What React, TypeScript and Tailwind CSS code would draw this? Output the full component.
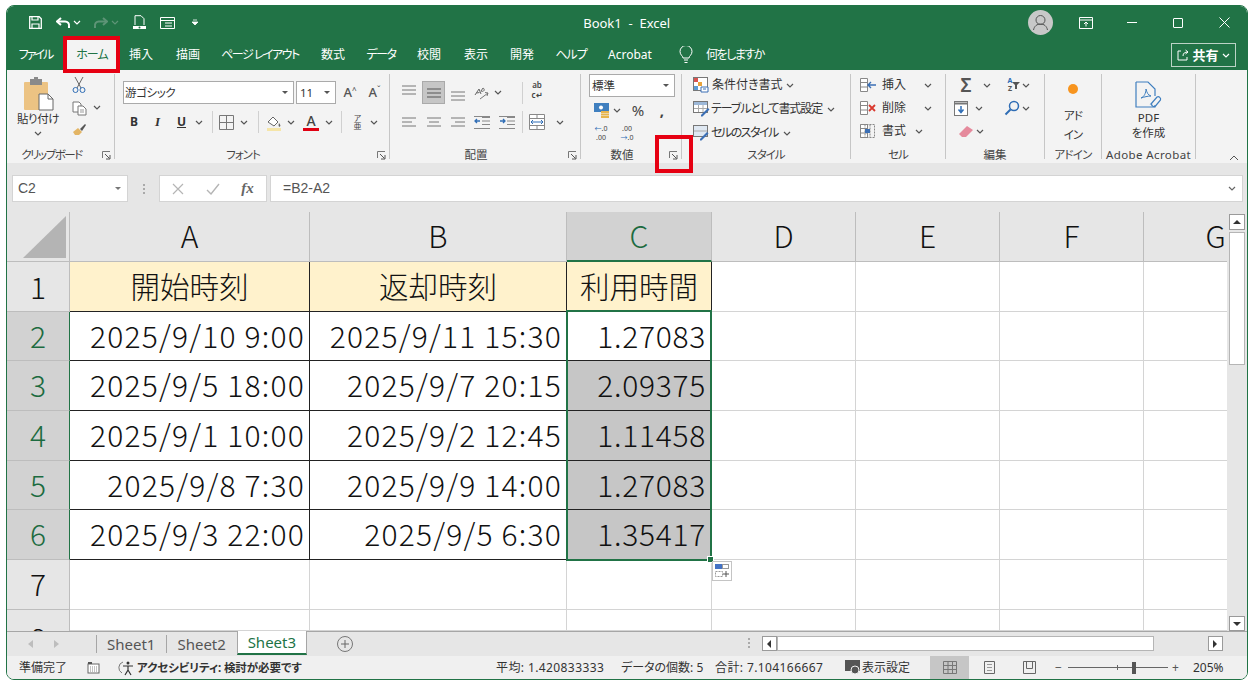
import type { ReactNode } from 'react';

const tabs = [
  { label: 'ファイル', w: 57, cls: 'tracking-[-2px]' },
  { label: 'ホーム', w: 56, cls: 'tracking-[-1px]' },
  { label: '挿入', w: 42, cls: '' },
  { label: '描画', w: 52, cls: '' },
  { label: 'ページ レイアウト', w: 92, cls: 'tracking-[-1.5px]' },
  { label: '数式', w: 54, cls: '' },
  { label: 'データ', w: 42, cls: 'tracking-[-1.5px]' },
  { label: '校閲', w: 54, cls: '' },
  { label: '表示', w: 40, cls: '' },
  { label: '開発', w: 52, cls: '' },
  { label: 'ヘルプ', w: 46, cls: 'tracking-[-1px]' },
  { label: 'Acrobat', w: 72, cls: '' },
];

const rows = [
  ['2025/9/10 9:00', '2025/9/11 15:30', '1.27083'],
  ['2025/9/5 18:00', '2025/9/7 20:15', '2.09375'],
  ['2025/9/1 10:00', '2025/9/2 12:45', '1.11458'],
  ['2025/9/8 7:30', '2025/9/9 14:00', '1.27083'],
  ['2025/9/3 22:00', '2025/9/5 6:30', '1.35417'],
];

const cols = ['A', 'B', 'C', 'D', 'E', 'F', 'G'];
const heads = ['開始時刻', '返却時刻', '利用時間'];

function Chev({ color = '#555' }: { color?: string }) {
  return (
    <svg width="8" height="5" viewBox="0 0 8 5" className="shrink-0">
      <path d="M1 1l3 3 3-3" fill="none" stroke={color} strokeWidth="1.2" />
    </svg>
  );
}

function Launcher() {
  return (
    <svg width="9" height="9" viewBox="0 0 9 9">
      <path d="M.5 7V.5H8" fill="none" stroke="#777" />
      <path d="M3 3l4.5 4.5M8 4v4H4" fill="none" stroke="#555" />
    </svg>
  );
}

function Slot({ w, children }: { w: number; children?: ReactNode }) {
  return (
    <div className="flex shrink-0 items-center justify-center" style={{ width: w }}>
      {children}
    </div>
  );
}

function VSep() {
  return <div className="h-[22px] w-px shrink-0 bg-[#d0d0d0]" />;
}

function Group({ w, label, labelClass = '', launcher, children }: { w: number; label: string; labelClass?: string; launcher?: boolean; children: ReactNode }) {
  return (
    <div className="my-[4px] flex max-h-[85px] shrink-0 flex-col border-r border-[#c6c6c6]" style={{ width: w }}>
      <div className="min-h-0 flex-1">{children}</div>
      <div className="relative flex h-[16px] translate-y-[4px] items-center justify-center text-[11.5px] leading-none whitespace-nowrap text-[#444]">
        <span className={launcher ? 'pr-[18px] ' + labelClass : labelClass}>{label}</span>
        {launcher && (
          <span className="absolute right-[3px] top-[4px] flex">
            <Launcher />
          </span>
        )}
      </div>
    </div>
  );
}

function Lines({ a = 'left', color = '#777' }: { a?: string; color?: string }) {
  const x = a === 'center' ? [1, 3, 1] : a === 'right' ? [1, 5, 1] : [1, 1, 1];
  const w = a === 'full' ? [14, 14, 14] : [14, 10, 14];
  return (
    <svg width="16" height="10" viewBox="0 0 16 10">
      {[1, 5, 9].map((y, i) => (
        <path key={y} d={`M${x[i]} ${y}h${w[i]}`} stroke={color} />
      ))}
    </svg>
  );
}

function SmallIcon({ kind }: { kind: string }) {
  if (kind === 'cond')
    return (
      <svg width="16" height="16" viewBox="0 0 16 16">
        <rect x=".5" y=".5" width="14" height="13" fill="#fff" stroke="#777" />
        <rect x="1" y="1" width="4" height="4" fill="#d9534f" />
        <rect x="5" y="5" width="4" height="4" fill="#e8a33d" />
        <rect x="1" y="9" width="4" height="4" fill="#5b9bd5" />
        <path d="M8 10h7v5H8z" fill="#fff" stroke="#3b6fb5" />
        <path d="M10 12h3" stroke="#3b6fb5" />
      </svg>
    );
  if (kind === 'table')
    return (
      <svg width="17" height="16" viewBox="0 0 17 16">
        <rect x=".5" y=".5" width="14" height="11" fill="#fff" stroke="#777" />
        <rect x="1" y="1" width="13" height="3" fill="#9db8d8" />
        <path d="M1 7.5h13M5.5 4v7M10 4v7" stroke="#aaa" />
        <path d="M8 14l7-7 1.5 1.5-7 7H8z" fill="#3b6fb5" />
      </svg>
    );
  return (
    <svg width="17" height="16" viewBox="0 0 17 16">
      <rect x=".5" y=".5" width="14" height="11" fill="#dfe8f2" stroke="#777" />
      <path d="M1 6h13" stroke="#aaa" />
      <path d="M7 14l7-7 1.5 1.5-7 7H7z" fill="#3b6fb5" />
    </svg>
  );
}

function CellsIcon({ kind }: { kind: string }) {
  return (
    <svg width="18" height="16" viewBox="0 0 18 16">
      <path d="M1.5 1.5h7v13h-7zM1.5 5.5h7M1.5 10h7" fill="#fff" stroke="#888" />
      {kind === 'ins' && <path d="M9 8h8M12 5l-3 3 3 3" fill="none" stroke="#3b6fb5" strokeWidth="1.4" />}
      {kind === 'del' && <path d="M10 5l6 6M16 5l-6 6" stroke="#d9382e" strokeWidth="1.8" />}
      {kind === 'fmt' && (
        <>
          <path d="M1.5 1.5h14v13h-14zM6 1.5v13M11 1.5v13" fill="none" stroke="#888" strokeDasharray="2 1" />
          <rect x="6" y="6" width="5" height="4" fill="#3b6fb5" />
        </>
      )}
    </svg>
  );
}

function Ribbon() {
  return (
    <div className="flex h-[93px] shrink-0 bg-[#f3f3f3] text-[#333]">
      <Group w={108} label="クリップボード" labelClass="tracking-[-1.5px]" launcher>
        <div className="flex h-full">
          <div className="flex w-[62px] flex-col items-center pt-[3px]">
            <svg width="32" height="34" viewBox="0 0 32 34">
              <rect x="2" y="5" width="24" height="28" rx="1" fill="#ecc383" />
              <rect x="8" y="2" width="12" height="6" fill="#8a8a8a" />
              <rect x="12" y="0" width="4" height="3" fill="#8a8a8a" />
              <path d="M17 17h9l5 5v11H17z" fill="#fff" stroke="#666" />
              <path d="M26 17v5h5" fill="none" stroke="#666" />
            </svg>
            <span className="mt-[1px] text-[11.5px] leading-[14px] tracking-[-0.4px] whitespace-nowrap">貼り付け</span>
            <span className="mt-[5px]">
              <Chev />
            </span>
          </div>
          <div className="flex w-[20px] flex-col items-center gap-[7px] pt-[2px]">
            <svg width="14" height="18" viewBox="0 0 14 18">
              <path d="M3 1l6 11M11 1L5 12" stroke="#666" />
              <circle cx="3.5" cy="14" r="2.5" fill="none" stroke="#2f6db5" />
              <circle cx="10.5" cy="14" r="2.5" fill="none" stroke="#2f6db5" />
            </svg>
            <svg width="15" height="15" viewBox="0 0 15 15">
              <path d="M1 1h6l2 2v8H1z" fill="#fff" stroke="#777" />
              <path d="M6 5h5l3 3v6H6z" fill="#fff" stroke="#777" />
              <path d="M8 9h4M8 11h4" stroke="#999" />
            </svg>
            <svg width="15" height="13" viewBox="0 0 15 13">
              <path d="M1 9l5-4 4 4-3 3H3z" fill="#e3b565" />
              <path d="M8 6l5-5 1 1-4 6z" fill="#555" />
            </svg>
          </div>
          <div className="flex h-[66px] w-[16px] items-center justify-center">
            <Chev />
          </div>
        </div>
      </Group>

      <Group w={275} label="フォント" labelClass="tracking-[-1px]" launcher>
        <div className="flex flex-col pl-[8px] pt-[7px]">
          <div className="flex h-[23px] items-center">
            <div className="flex h-[23px] w-[171px] items-center justify-between border border-[#aaa] bg-white pl-[1px] pr-[5px] text-[11.5px] tracking-[-0.4px]">
              游ゴシック
              <svg width="6" height="3" viewBox="0 0 6 3">
                <path d="M0 0h6L3 3z" fill="#555" />
              </svg>
            </div>
            <div className="ml-[2px] flex h-[23px] w-[40px] items-center justify-between border border-[#aaa] bg-white pl-[3px] pr-[5px] text-[11.5px]">
              11
              <svg width="6" height="3" viewBox="0 0 6 3">
                <path d="M0 0h6L3 3z" fill="#555" />
              </svg>
            </div>
            <Slot w={26}>
              <span className="ml-[2px] text-[13px] font-medium text-[#555]">A<sup className="text-[8px]">^</sup></span>
            </Slot>
            <Slot w={24}>
              <span className="ml-[1px] text-[13px] font-medium text-[#555]">A<sup className="text-[8px]">ˇ</sup></span>
            </Slot>
          </div>
          <div className="mt-[7px] flex h-[22px] items-center">
            <Slot w={22}><b className="text-[12px] text-[#333]">B</b></Slot>
            <Slot w={25}><i className="font-['Liberation_Serif',serif] text-[13px] font-bold text-[#333]">I</i></Slot>
            <Slot w={23}><b className="text-[12px] leading-[14px] text-[#333] underline">U</b></Slot>
            <Slot w={12}><Chev /></Slot>
            <Slot w={7} />
            <VSep />
            <Slot w={5} />
            <Slot w={16}>
              <svg width="15" height="15" viewBox="0 0 15 15">
                <path d="M.5.5h14v14H.5zM7.5.5v14M.5 7.5h14" fill="none" stroke="#777" />
              </svg>
            </Slot>
            <Slot w={20}><Chev /></Slot>
            <Slot w={4} />
            <VSep />
            <Slot w={7} />
            <Slot w={17}>
              <svg width="17" height="17" viewBox="0 0 17 17">
                <path d="M2 8l5-5 5 5-4 4z" fill="#fff" stroke="#666" />
                <path d="M13 9c1 1.500 2 2.500 1 3.500s-2-.5-1-3.500z" fill="#666" />
                <rect x="1" y="14" width="14" height="3" fill="#f5e5a8" />
              </svg>
            </Slot>
            <Slot w={16}><Chev /></Slot>
            <Slot w={2} />
            <Slot w={20}>
              <span className="flex flex-col items-center">
                <span className="text-[14px] leading-[14px] font-medium text-[#444]">A</span>
                <span className="h-[3px] w-[16px] bg-[#e00012]" />
              </span>
            </Slot>
            <Slot w={16}><Chev /></Slot>
            <Slot w={4} />
            <VSep />
            <Slot w={5} />
            <Slot w={20}>
              <span className="text-[8px] leading-[8px] text-[#444] [writing-mode:vertical-rl]">ア亜</span>
            </Slot>
            <Slot w={14}><Chev /></Slot>
          </div>
        </div>
      </Group>

      <Group w={191} label="配置" launcher>
        <div className="flex flex-col pl-[11px] pt-[7px]">
          <div className="flex h-[23px] items-center">
            <Slot w={16}><span className="-mt-[6px] flex"><Lines a="full" /></span></Slot>
            <Slot w={5} />
            <div className="flex h-[23px] w-[23px] items-center justify-center border border-[#aaa] bg-[#c6c6c6]">
              <Lines a="full" color="#555" />
            </div>
            <Slot w={1} />
            <Slot w={23}><span className="mt-[6px] flex"><Lines a="full" /></span></Slot>
            <Slot w={24}>
              <svg width="18" height="15" viewBox="0 0 18 15">
                <path d="M3 10l4-6 2 5M4.500 8l3-.5M9 6l2-3c1 .5 1.500 1.500 1 2.500s-2 1-3 .5z" fill="none" stroke="#666" />
                <path d="M8 14l8-6M13 7.500l3 .5-1 3" fill="none" stroke="#777" />
              </svg>
            </Slot>
            <Slot w={10}><Chev /></Slot>
            <Slot w={19} />
            <VSep />
            <Slot w={3} />
            <Slot w={22}>
              <span className="mt-[-6px] text-center text-[8px] leading-[10px] font-semibold text-[#444]">ab<br />c↵</span>
            </Slot>
          </div>
          <div className="mt-[7px] flex h-[22px] items-center">
            <Slot w={16}><Lines a="left" /></Slot>
            <Slot w={5} />
            <Slot w={23}><Lines a="center" /></Slot>
            <Slot w={1} />
            <Slot w={23}><Lines a="right" /></Slot>
            <Slot w={25}>
              <svg width="16" height="13" viewBox="0 0 16 13">
                <path d="M8 1.500h8M8 5h8M8 8.500h8M0 12.500h16M0 .5h16" stroke="#888" />
                <path d="M6 5H1M3 3L1 5l2 2" fill="none" stroke="#2f6db5" strokeWidth="1.3" />
              </svg>
            </Slot>
            <Slot w={25}>
              <svg width="16" height="13" viewBox="0 0 16 13">
                <path d="M8 1.500h8M8 5h8M8 8.500h8M0 12.500h16M0 .5h16" stroke="#888" />
                <path d="M1 5h5M4 3l2 2-2 2" fill="none" stroke="#2f6db5" strokeWidth="1.3" />
              </svg>
            </Slot>
            <Slot w={3} />
            <VSep />
            <Slot w={3} />
            <Slot w={22}>
              <svg width="16" height="16" viewBox="0 0 16 16">
                <path d="M.5.5h15v15H.5zM.5 4.500h15M.5 11.500h15M8 .5v4M8 11.500v4" fill="#fff" stroke="#888" />
                <path d="M2 8h12M4 6L2 8l2 2M12 6l2 2-2 2" fill="none" stroke="#2f6db5" />
              </svg>
            </Slot>
            <Slot w={24}><Chev /></Slot>
          </div>
        </div>
      </Group>

      <Group w={101} label="数値" launcher>
        <div className="flex flex-col pl-[8px]">
          <div className="flex h-[23px] w-[86px] items-center justify-between border border-[#aaa] bg-white pl-[2px] pr-[5px] text-[11.5px]">
            標準
            <svg width="6" height="3" viewBox="0 0 6 3">
              <path d="M0 0h6L3 3z" fill="#555" />
            </svg>
          </div>
          <div className="mt-[1px] flex h-[24px] items-center">
            <Slot w={24}>
              <svg width="17" height="16" viewBox="0 0 17 16">
                <rect x="1" y="1" width="15" height="9" fill="#3f7fbf" />
                <circle cx="8" cy="5.500" r="2" fill="#fff" />
                <rect x="8" y="9" width="8" height="2" fill="#e8b54d" />
                <rect x="8" y="11.500" width="8" height="2" fill="#e8b54d" />
                <rect x="8" y="14" width="8" height="2" fill="#e8b54d" />
              </svg>
            </Slot>
            <Slot w={8}><Chev /></Slot>
            <Slot w={34}><span className="text-[15px] leading-none text-[#444]">%</span></Slot>
            <Slot w={14}><b className="text-[15px] leading-none text-[#444]">,</b></Slot>
          </div>
          <div className="flex h-[22px] items-center">
            <Slot w={24}>
              <span className="text-center text-[7px] leading-[9px] text-[#444]"><span className="text-[#2f6db5]">←</span>.0<br />.00</span>
            </Slot>
            <Slot w={28}>
              <span className="text-center text-[7px] leading-[9px] text-[#444]">.00<br /><span className="text-[#2f6db5]">→</span>.0</span>
            </Slot>
          </div>
        </div>
      </Group>

      <Group w={169} label="スタイル" labelClass="tracking-[-1px]">
        <div className="flex flex-col gap-[2px] pl-[11px] text-[12px] leading-none whitespace-nowrap">
          <div className="flex h-[22px] items-center gap-[3px]"><SmallIcon kind="cond" />条件付き書式<Chev /></div>
          <div className="flex h-[22px] items-center gap-[1px]"><SmallIcon kind="table" /><span className="tracking-[-1.1px]">テーブルとして書式設定</span><span className="ml-[4px] flex"><Chev /></span></div>
          <div className="flex h-[22px] items-center gap-[1px]"><SmallIcon kind="cell" /><span className="tracking-[-1.5px]">セルのスタイル</span><span className="ml-[4px] flex"><Chev /></span></div>
        </div>
      </Group>

      <Group w={95} label="セル" labelClass="tracking-[-1px]">
        <div className="flex flex-col gap-[1px] pl-[8px] text-[12px] leading-none whitespace-nowrap">
          <div className="flex h-[22px] items-center gap-[3px]"><span className="flex w-[20px]"><CellsIcon kind="ins" /></span>挿入<span className="ml-[15px] flex"><Chev /></span></div>
          <div className="flex h-[22px] items-center gap-[3px]"><span className="flex w-[20px]"><CellsIcon kind="del" /></span>削除<span className="ml-[15px] flex"><Chev /></span></div>
          <div className="flex h-[22px] items-center gap-[3px]"><span className="flex w-[20px]"><CellsIcon kind="fmt" /></span>書式<span className="ml-[6px] flex"><Chev /></span></div>
        </div>
      </Group>

      <Group w={99} label="編集">
        <div className="flex flex-col gap-[1px] pl-[12px]">
          <div className="flex h-[22px] items-center">
            <Slot w={16}><span className="text-[19px] leading-none font-semibold text-[#555]">Σ</span></Slot>
            <Slot w={26}><Chev /></Slot>
            <Slot w={5} />
            <Slot w={18}>
              <span className="text-center text-[7px] leading-[8px] font-bold text-[#555]"><span className="text-[#2f6db5]">A</span><br />Z</span>
              <svg width="8" height="7" viewBox="0 0 8 7"><path d="M0 0h8L5 3v4H3V3z" fill="#555" /></svg>
            </Slot>
            <Slot w={6}><Chev /></Slot>
          </div>
          <div className="-ml-[5px] flex h-[22px] items-center">
            <Slot w={16}>
              <svg width="14" height="15" viewBox="0 0 14 15">
                <rect x=".5" y=".5" width="13" height="14" fill="#fff" stroke="#777" />
                <path d="M1 2.500h12" stroke="#777" strokeWidth="2" />
                <path d="M7 5v6M4.500 8.500L7 11.500l2.500-3" fill="none" stroke="#2f6db5" strokeWidth="1.5" />
              </svg>
            </Slot>
            <Slot w={20}><Chev /></Slot>
            <Slot w={12} />
            <Slot w={22}>
              <svg width="16" height="16" viewBox="0 0 16 16">
                <circle cx="10" cy="6" r="4.500" fill="none" stroke="#2f6db5" strokeWidth="1.500" />
                <path d="M6.500 9.500L1.500 14.500" stroke="#2f6db5" strokeWidth="2" />
              </svg>
            </Slot>
            <Slot w={6}><Chev /></Slot>
          </div>
          <div className="flex h-[22px] items-center">
            <Slot w={16}>
              <svg width="16" height="13" viewBox="0 0 16 13">
                <path d="M1 9l8-8 6 4-7 7H4z" fill="#e58a9c" />
              </svg>
            </Slot>
            <Slot w={12}><Chev /></Slot>
          </div>
        </div>
      </Group>

      <Group w={57} label="アドイン" labelClass="tracking-[-0.8px]">
        <div className="flex flex-col items-center pt-[10px] text-[11.5px] leading-[19px] tracking-[-0.8px]">
          <span className="mb-[12px] h-[10px] w-[10px] rounded-full bg-[#f7941e]" />
          <span>アド</span>
          <span>イン</span>
        </div>
      </Group>

      <Group w={94} label="Adobe Acrobat" labelClass="tracking-[0.4px]">
        <div className="flex flex-col items-center pt-[7px] text-[11.5px] leading-[15px]">
          <svg width="27" height="31" viewBox="0 0 27 31" className="-mb-[2px]">
            <path d="M1 1h12l7 7v7M20 24v2H1V1" fill="none" stroke="#3f7fbf" strokeWidth="1.2" />
            <path d="M6 17c3-1 5-5 5-9 1 4 2 6 5 7-3 0-7 1-10 2z" fill="none" stroke="#3f7fbf" />
            <path d="M16 23l6-7a2.500 2.500 0 0 1 3.500 3l-5 6a2.500 2.500 0 0 1-4-2z" fill="none" stroke="#3f7fbf" strokeWidth="1.2" />
          </svg>
          <span>PDF</span>
          <span>を作成</span>
        </div>
      </Group>

      <div className="flex flex-1 items-end justify-end pb-[2px] pr-[8px]">
        <svg width="10" height="6" viewBox="0 0 10 6">
          <path d="M1 5l4-4 4 4" fill="none" stroke="#555" />
        </svg>
      </div>
    </div>
  );
}

function FormulaBar() {
  return (
    <div className="flex h-[49px] shrink-0 items-start bg-[#e6e6e6] pl-[5px] pr-[4px] pt-[12px] font-['Liberation_Sans',sans-serif] text-[#555]">
      <div className="flex h-[27px] w-[116px] items-center justify-between border border-[#d4d4d4] bg-white pl-[5px] pr-[6px] text-[14px]">
        C2
        <svg width="6" height="3" viewBox="0 0 6 3">
          <path d="M0 0h6L3 3z" fill="#777" />
        </svg>
      </div>
      <div className="flex h-[27px] w-[31px] flex-col items-center justify-center gap-[2px]">
        <span className="h-[2px] w-[2px] bg-[#aaa]" />
        <span className="h-[2px] w-[2px] bg-[#aaa]" />
        <span className="h-[2px] w-[2px] bg-[#aaa]" />
      </div>
      <div className="flex h-[27px] w-[108px] items-center border border-[#d4d4d4] bg-white">
        <Slot w={35}>
          <svg width="12" height="12" viewBox="0 0 12 12">
            <path d="M1 1l10 10M11 1L1 11" stroke="#b5b5b5" strokeWidth="1.2" />
          </svg>
        </Slot>
        <Slot w={35}>
          <svg width="14" height="12" viewBox="0 0 14 12">
            <path d="M1 7l4 4 8-10" fill="none" stroke="#b5b5b5" strokeWidth="1.4" />
          </svg>
        </Slot>
        <Slot w={35}>
          <i className="font-['Liberation_Serif',serif] text-[15px] font-bold text-[#666]">fx</i>
        </Slot>
      </div>
      <div className="ml-[3px] flex h-[27px] flex-1 items-center justify-between border border-[#d4d4d4] bg-white pl-[12px] pr-[6px] text-[14px]">
        =B2-A2
        <Chev color="#666" />
      </div>
    </div>
  );
}

function Sheet() {
  return (
    <div className="relative flex h-[419px] shrink-0 overflow-hidden bg-white">
      <div className="relative w-[1220px] shrink-0 overflow-hidden">
        <div className="grid w-[1281px] grid-cols-[63px_240px_257px_145px_144px_144px_144px_144px] grid-rows-[50px_50px_49px_50px_50px_49px_50px_50px_21px] font-['Noto_Sans_CJK_JP','Noto_Sans',sans-serif] text-[30px] leading-none font-light text-[#111] [font-feature-settings:normal]">
          <div className="flex items-end justify-end border-b border-r border-[#bdbdbd] bg-[#e6e6e6] pb-[3px] pr-[2px]">
            <svg width="44" height="42" viewBox="0 0 44 42">
              <path d="M43 0v42H0z" fill="#b4b4b4" />
            </svg>
          </div>
          {cols.map((c) => (
            <div
              key={c}
              className={
                c === 'C'
                  ? 'flex items-center justify-center border-b-2 border-r border-b-[#217346] border-r-[#bdbdbd] bg-[#d2d2d2] pb-[3px] text-[#1c6b40]'
                  : 'flex items-center justify-center border-b border-r border-[#bdbdbd] bg-[#e6e6e6] pb-[3px]'
              }
            >
              {c}
            </div>
          ))}

          <div className="flex items-center justify-center border-b border-r border-[#bdbdbd] bg-[#e6e6e6] pb-[2px]">1</div>
          {heads.map((h) => (
            <div key={h} className="flex items-center justify-center border-b border-r border-[#222] bg-[#fff2cc] pb-[2px] text-[29.5px]">
              {h}
            </div>
          ))}
          {[0, 1, 2, 3].map((i) => (
            <div key={i} className="border-b border-r border-[#d4d4d4]" />
          ))}

          {rows.map((r, i) => (
            <div key={i} className="contents">
              <div className="flex items-center justify-center border-b border-r border-b-[#bdbdbd] border-r-[#217346] bg-[#d2d2d2] pb-[3px] text-[#1c6b40]">
                {i + 2}
              </div>
              <div className="flex items-center justify-end border-b border-r border-[#222] pb-[3px] pr-[4px] tracking-[1.2px]">{r[0]}</div>
              <div className="flex items-center justify-end border-b border-r border-[#222] pb-[3px] pr-[4px] tracking-[1.2px]">{r[1]}</div>
              <div className={i === 0 ? 'flex items-center justify-end border-b border-r border-[#222] pb-[3px] pr-[5px] tracking-[0.7px]' : 'flex items-center justify-end border-b border-r border-[#222] bg-[#c6c6c6] pb-[3px] pr-[5px] tracking-[0.7px]'}>
                {r[2]}
              </div>
              {[0, 1, 2, 3].map((k) => (
                <div key={k} className="border-b border-r border-[#d4d4d4]" />
              ))}
            </div>
          ))}

          {['7', '8'].map((n) => (
            <div key={n} className="contents">
              <div className={n === '8' ? 'flex items-start justify-center overflow-hidden border-r border-[#bdbdbd] bg-[#e6e6e6] pt-[12px]' : 'flex items-center justify-center border-b border-r border-[#bdbdbd] bg-[#e6e6e6] pb-[3px]'}>
                {n}
              </div>
              {[0, 1, 2, 3, 4, 5, 6].map((k) => (
                <div key={k} className="border-b border-r border-[#d4d4d4]" />
              ))}
            </div>
          ))}
        </div>

        {/* selection C2:C6 */}
        <div className="absolute left-[559px] top-[98px] h-[251px] w-[146px] border-2 border-[#217346]" />
        <div className="absolute left-[700px] top-[344px] h-[7px] w-[7px] border border-white bg-[#217346]" />
        <div className="absolute left-[705px] top-[349px] flex h-[20px] w-[20px] items-center justify-center border border-[#c4c4c4] bg-white">
          <svg width="15" height="14" viewBox="0 0 15 14">
            <rect x="0" y="0" width="7" height="5" fill="#4472c4" />
            <rect x="7.500" y=".5" width="6" height="4" fill="#fff" stroke="#999" />
            <rect x=".5" y="7.500" width="7" height="5" fill="#fff" stroke="#999" strokeDasharray="2 1" />
            <path d="M11 7v6M8 10h6" stroke="#555" />
          </svg>
        </div>
      </div>

      <div className="flex flex-1 flex-col items-center bg-[#e6e6e6] pt-[2px]">
        <div className="flex h-[16px] w-[16px] items-center justify-center border border-[#9a9a9a] bg-white">
          <svg width="8" height="4" viewBox="0 0 8 4"><path d="M4 0l4 4H0z" fill="#333" /></svg>
        </div>
        <div className="mt-[2px] h-[133px] w-[16px] border border-[#b5b5b5] bg-white" />
        <div className="flex-1" />
        <div className="flex h-[15px] w-[16px] items-center justify-center border border-[#9a9a9a] bg-white">
          <svg width="8" height="4" viewBox="0 0 8 4"><path d="M0 0h8L4 4z" fill="#333" /></svg>
        </div>
      </div>
    </div>
  );
}

function SheetTabs() {
  return (
    <div className="flex h-[25px] shrink-0 items-start border-t border-[#a6a6a6] bg-[#e6e6e6] text-[15px] text-[#555]">
      <div className="ml-[21px] flex h-[24px] w-[68px] items-center gap-[21px]">
        <svg width="5" height="8" viewBox="0 0 5 8"><path d="M5 0v8L0 4z" fill="#bdbdbd" /></svg>
        <svg width="5" height="8" viewBox="0 0 5 8"><path d="M0 0v8l5-4z" fill="#bdbdbd" /></svg>
      </div>
      <div className="mt-[3px] flex h-[18px] items-center border-l border-[#a6a6a6] pl-[10px] pr-[11px]">Sheet1</div>
      <div className="mt-[3px] flex h-[18px] items-center border-l border-[#a6a6a6] pl-[10px] pr-[11px]">Sheet2</div>
      <div className="-mt-px flex h-[24px] w-[70px] items-center justify-center border-x border-b-2 border-x-[#a6a6a6] border-b-[#217346] bg-white text-[#217346]">Sheet3</div>
      <div className="ml-[30px] mt-[4px] flex h-[16px] w-[16px] items-center justify-center rounded-full border border-[#777]">
        <svg width="10" height="10" viewBox="0 0 10 10"><path d="M5 1v8M1 5h8" stroke="#666" /></svg>
      </div>
      <div className="ml-[395px] mt-[6px] flex h-[12px] w-[14px] flex-col gap-[2px]">
        <span className="h-[2px] w-[2px] bg-[#aaa]" />
        <span className="h-[2px] w-[2px] bg-[#aaa]" />
        <span className="h-[2px] w-[2px] bg-[#aaa]" />
      </div>
      <div className="mt-[4px] flex h-[15px] w-[15px] items-center justify-center border border-[#9a9a9a] bg-white">
        <svg width="4" height="8" viewBox="0 0 4 8"><path d="M4 0v8L0 4z" fill="#333" /></svg>
      </div>
      <div className="mt-[4px] h-[15px] w-[377px] border border-[#b5b5b5] bg-white" />
      <div className="ml-[54px] mt-[4px] flex h-[15px] w-[15px] items-center justify-center border border-[#9a9a9a] bg-white">
        <svg width="4" height="8" viewBox="0 0 4 8"><path d="M0 0v8l4-4z" fill="#333" /></svg>
      </div>
    </div>
  );
}

function StatusBar() {
  return (
    <div className="flex h-[23px] shrink-0 items-center bg-[#f0f0f0] pl-[12px] text-[12px] leading-none whitespace-nowrap text-[#333]">
      <span className="w-[68px]">準備完了</span>
      <svg width="13" height="13" viewBox="0 0 13 13" className="shrink-0">
        <rect x="1" y="3" width="11" height="9" fill="#fff" stroke="#666" />
        <path d="M1 1h4v2H1z" fill="#555" />
        <path d="M3 6h7M3 8h7M3 10h7" stroke="#888" strokeDasharray="1 1" />
      </svg>
      <span className="ml-[18px] flex">
        <svg width="18" height="16" viewBox="0 0 18 16">
          <path d="M5 2a6 6 0 0 0-1 11" fill="none" stroke="#777" />
          <circle cx="10" cy="3" r="1.500" fill="#333" />
          <path d="M5 6h10M10 6v4l-3 5M10 10l3 5" fill="none" stroke="#333" strokeWidth="1.200" />
        </svg>
      </span>
      <b className="ml-[1px] w-[359px] text-[11.5px] font-bold tracking-[-0.1px]">アクセシビリティ: 検討が必要です</b>
      <span className="w-[125px] tracking-[0.4px]">平均: 1.420833333</span>
      <span className="w-[94px]">データの個数: 5</span>
      <span className="w-[130px] tracking-[0.4px]">合計: 7.104166667</span>
      <svg width="17" height="15" viewBox="0 0 17 15" className="shrink-0">
        <rect x="0" y="0" width="15" height="11" fill="#555" />
        <circle cx="10" cy="10" r="4" fill="#555" stroke="#f0f0f0" />
      </svg>
      <span className="w-[68px]">表示設定</span>
      <div className="flex h-[23px] w-[39px] items-center justify-center bg-[#c6c6c6]">
        <svg width="14" height="13" viewBox="0 0 14 13">
          <path d="M.5.5h13v12H.5zM.5 4.500h13M.5 8.500h13M5 .5v12M9.500.5v12" fill="none" stroke="#777" />
        </svg>
      </div>
      <Slot w={40}>
        <svg width="11" height="13" viewBox="0 0 11 13">
          <path d="M.5.5h10v12H.5z" fill="none" stroke="#666" />
          <path d="M3 3.500h5M3 6.500h5M3 9.500h5" stroke="#999" />
        </svg>
      </Slot>
      <Slot w={40}>
        <svg width="13" height="13" viewBox="0 0 13 13">
          <path d="M.5.5h12v12H.5zM3.500.5v7h6V.5" fill="none" stroke="#666" />
        </svg>
      </Slot>
      <span className="ml-[6px] w-[7px] text-[#555]">−</span>
      <div className="relative ml-[6px] flex h-[12px] w-[100px] items-center">
        <div className="h-px w-full bg-[#666]" />
        <span className="absolute left-[49px] h-[5px] w-px bg-[#666]" />
        <span className="absolute left-[64px] h-[12px] w-[4px] bg-[#555]" />
      </div>
      <span className="ml-[4px] w-[7px] text-[#555]">+</span>
      <span className="ml-[14px]">205%</span>
    </div>
  );
}

export default function App() {
  return (
    <div className="h-[686px] w-[1254px] overflow-hidden bg-white pl-[6px] pt-[5px]">
      <div className="relative flex h-[675px] w-[1242px] flex-col overflow-hidden rounded-[8px] border border-[#217346] font-['Noto_Sans','Noto_Sans_CJK_JP',sans-serif] [font-feature-settings:'palt']">
        {/* title bar */}
        <div className="flex h-[31px] shrink-0 items-center bg-[#217346] pt-[2px] text-white">
          <Slot w={22} />
          <Slot w={13}>
            <svg width="13" height="13" viewBox="0 0 13 13">
              <path d="M.7.7h9.500l2.100 2.100v9.500H.7z" fill="none" stroke="#fff" strokeWidth="1.300" />
              <path d="M3 1v3h6V1M3 12V8h7v4" fill="none" stroke="#fff" strokeWidth="1.200" />
            </svg>
          </Slot>
          <Slot w={13} />
          <Slot w={16}>
            <svg width="15" height="12" viewBox="0 0 15 12">
              <path d="M5 1L1 4.500 5 8" fill="none" stroke="#fff" strokeWidth="2" />
              <path d="M1 4.500h8a4 4 0 0 1 4 5V11" fill="none" stroke="#fff" strokeWidth="2" />
            </svg>
          </Slot>
          <Slot w={12}><Chev color="#fff" /></Slot>
          <Slot w={9} />
          <Slot w={16}>
            <svg width="15" height="12" viewBox="0 0 15 12">
              <path d="M10 1l4 3.500L10 8" fill="none" stroke="#5d9476" strokeWidth="2" />
              <path d="M14 4.500H6a4 4 0 0 0-4 5V11" fill="none" stroke="#5d9476" strokeWidth="2" />
            </svg>
          </Slot>
          <Slot w={14}><Chev color="#5d9476" /></Slot>
          <Slot w={10} />
          <Slot w={14}>
            <svg width="13" height="15" viewBox="0 0 13 15">
              <path d="M2 10V.7h6l3 3V10" fill="none" stroke="#fff" />
              <path d="M0 11h13v3H0z" fill="#fff" />
              <circle cx="6.500" cy="12.500" r="1" fill="#217346" />
            </svg>
          </Slot>
          <Slot w={13} />
          <Slot w={16}>
            <svg width="15" height="12" viewBox="0 0 15 12">
              <path d="M.5.5h14v11H.5zM.5 3.500h14M5 6h7M5 9h7" fill="none" stroke="#fff" />
            </svg>
          </Slot>
          <Slot w={13} />
          <Slot w={14}>
            <svg width="6" height="7" viewBox="0 0 6 7">
              <path d="M1 1h4M0 3h6L3 6z" stroke="#fff" fill="#fff" strokeWidth=".8" />
            </svg>
          </Slot>
          <div className="ml-[380px] mt-[2px] w-[90px] text-center text-[13px] leading-none whitespace-nowrap">Book1&nbsp;&nbsp;-&nbsp;&nbsp;Excel</div>
          <div className="ml-[357px] flex h-[25px] w-[25px] items-center justify-center rounded-full bg-[#c8c8c8]">
            <svg width="17" height="17" viewBox="0 0 17 17">
              <circle cx="8.500" cy="6" r="4.500" fill="none" stroke="#555" />
              <path d="M1.500 16c.8-4 3.500-6 7-6s6.200 2 7 6" fill="none" stroke="#555" />
            </svg>
          </div>
          <div className="ml-[10px] flex h-[14px] w-[46px] items-center justify-center">
            <svg width="14" height="12" viewBox="0 0 14 12">
              <path d="M.5.5h13v11H.5zM.5 3h13" fill="none" stroke="#fff" />
              <path d="M7 9.500V5M5 7l2-2 2 2" fill="none" stroke="#fff" />
            </svg>
          </div>
          <Slot w={46}><span className="h-px w-[10px] bg-white" /></Slot>
          <Slot w={46}><span className="h-[10px] w-[10px] rounded-[1px] border border-white" /></Slot>
          <Slot w={46}>
            <svg width="11" height="11" viewBox="0 0 11 11">
              <path d="M.5.5l10 10M10.500.5l-10 10" stroke="#fff" />
            </svg>
          </Slot>
        </div>

        {/* tabs */}
        <div className="flex h-[33px] shrink-0 items-end bg-[#217346] text-[12px] leading-none whitespace-nowrap text-white">
          {tabs.map((t) => (
            <div
              key={t.label}
              className={(t.label === 'ホーム' ? 'flex h-[30px] shrink-0 items-center justify-center bg-[#f3f3f3] text-[#217346] ' : 'flex h-[30px] shrink-0 items-center justify-center ') + t.cls}
              style={{ width: t.w }}
            >
              {t.label}
            </div>
          ))}
          <div className="ml-[13px] flex h-[30px] items-center gap-[13px] tracking-[-1.5px]">
            <svg width="14" height="18" viewBox="0 0 14 18">
              <path d="M4 12c0-2-3-3-3-6.500a6 6 0 0 1 12 0C13 9 10 10 10 12zM5 14h4M5.500 16.500h3" fill="none" stroke="#fff" />
            </svg>
            何をしますか
          </div>
          <div className="mb-[3px] ml-auto mr-[11px] flex h-[24px] w-[65px] items-center justify-center gap-[3px] border border-[#bcd3c6] text-[13px] font-bold">
            <svg width="12" height="12" viewBox="0 0 12 12">
              <path d="M4 2H1v9h9V8M6 7c0-3 2-4 5-4M8.500 1L11 3 8.500 5" fill="none" stroke="#fff" />
            </svg>
            共有
            <Chev color="#fff" />
          </div>
        </div>

        <Ribbon />
        <FormulaBar />
        <Sheet />
        <SheetTabs />
        <StatusBar />

        {/* red call-out boxes */}
        <div className="absolute left-[56px] top-[30px] h-[37px] w-[57px] border-4 border-[#e60012]" />
        <div className="absolute left-[648px] top-[129px] h-[38px] w-[38px] border-4 border-[#e60012]" />
      </div>
    </div>
  );
}
